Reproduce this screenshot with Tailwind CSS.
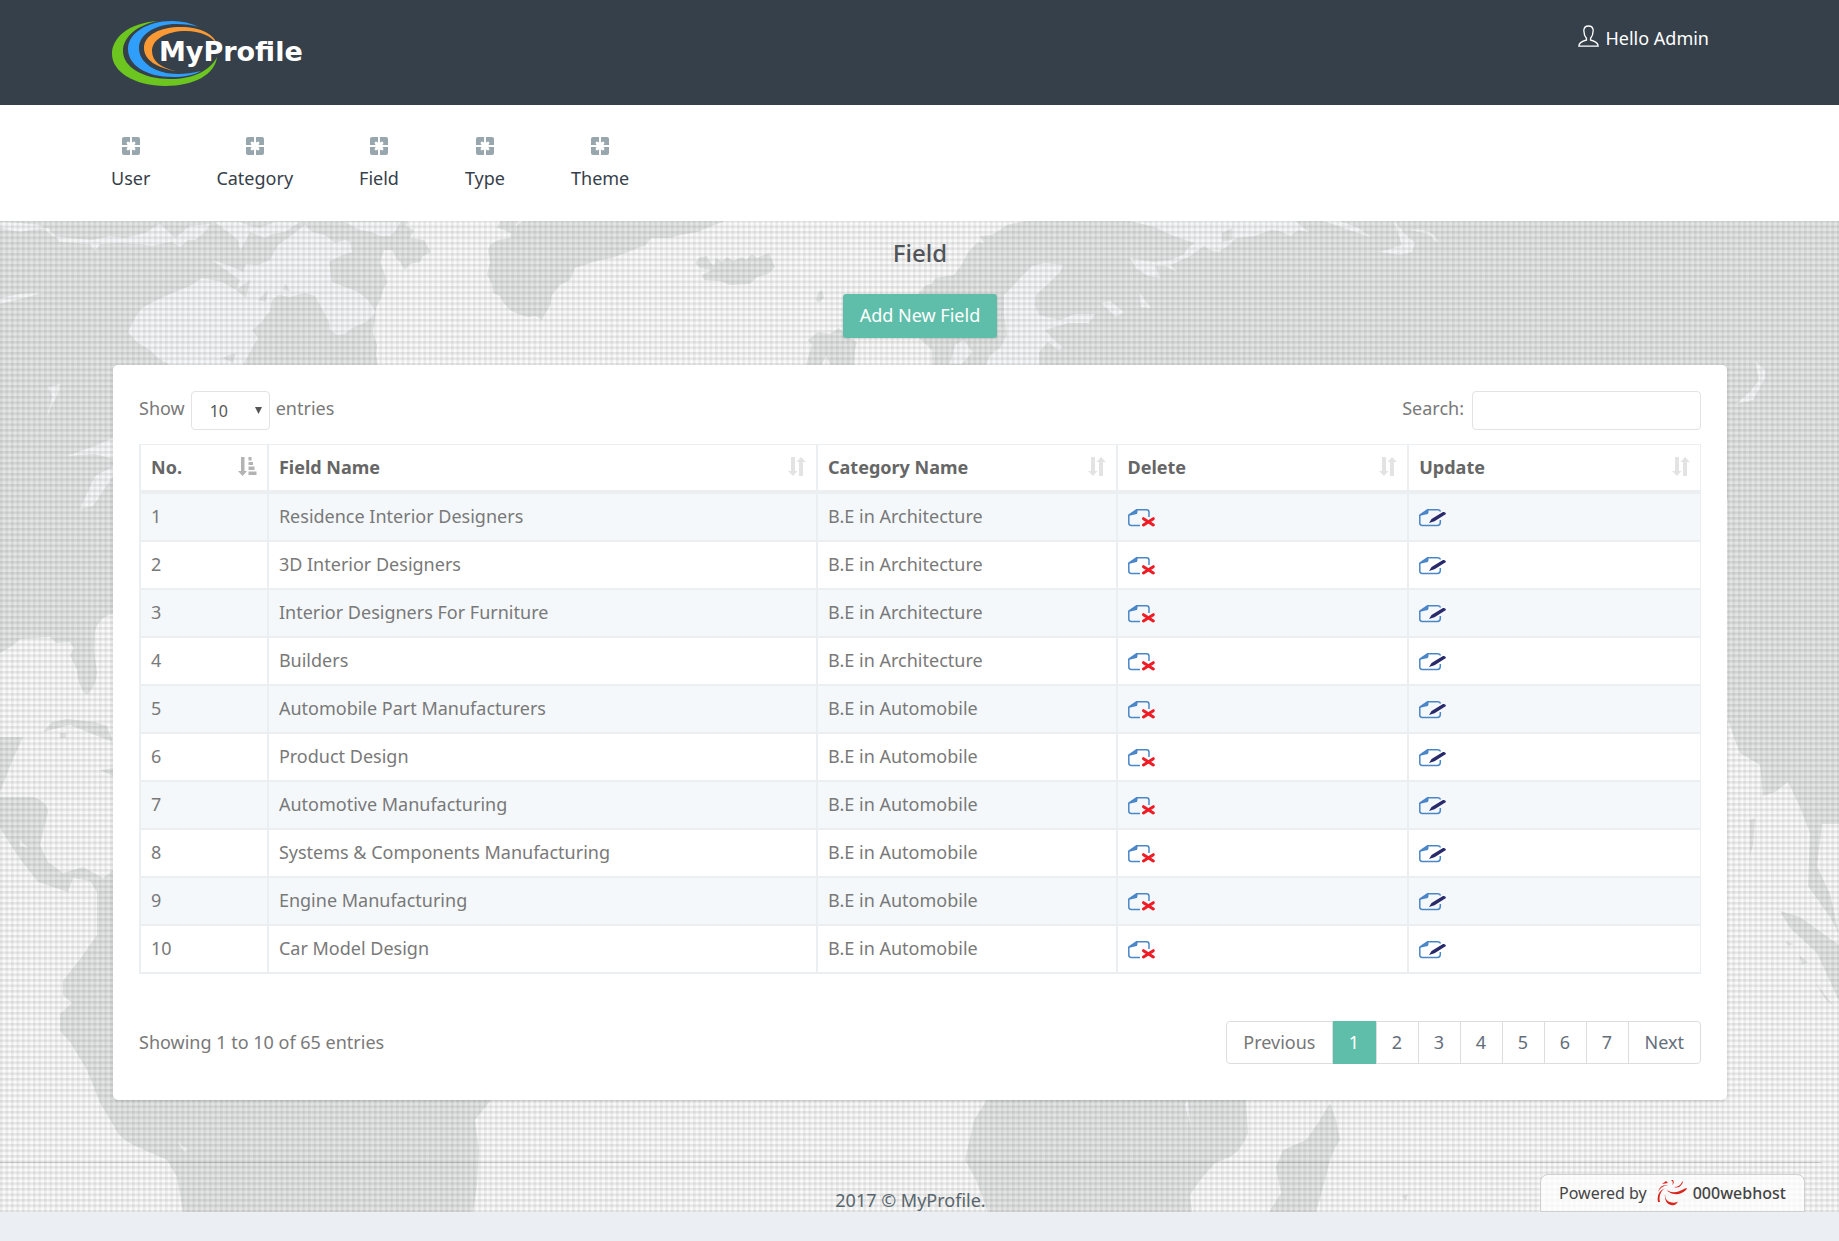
<!DOCTYPE html>
<html lang="en">
<head>
<meta charset="utf-8">
<title>MyProfile - Field</title>
<script src="https://cdn.jsdelivr.net/npm/@tailwindcss/browser@4"></script>
</head>
<body class="bg-[#ebeef3] font-['Noto_Sans',sans-serif] text-[18px] leading-6 text-[#797979]">

<svg class="hidden" aria-hidden="true">
  <symbol id="brackets" viewBox="0 0 18 18">
    <path fill="currentColor" d="M2 0H8V5.500L6 4.500 5 5 4.500 6 5.500 8H0V2Q0 0 2 0ZM10 0H16Q18 0 18 2V8H12.500L13.500 6 13 5 12 4.500 10 5.500ZM0 10H5.500L4.500 12 5 13 6 13.500 8 12.500V18H2Q0 18 0 16ZM18 10V16Q18 18 16 18H10V12.500L12 13.500 13 13 13.500 12 12.500 10Z"/>
  </symbol>
  <symbol id="sort-both" viewBox="0 0 18 19">
    <path fill="currentColor" d="M3 0H7V14H9.500L5 19 0 14H3ZM11 19V5H8.500L13 0 18 5H15V19Z"/>
  </symbol>
  <symbol id="sort-asc" viewBox="0 0 19 19">
    <path fill="currentColor" d="M3 0H6.500V14H9L4.500 19 0 14H3ZM10.500 0H13.500V3.500H10.500ZM10.500 5H15V8H10.500ZM10.500 9.500H16.500V13H10.500ZM10.500 14.500H18.500V18H10.500Z"/>
  </symbol>
  <symbol id="doc-delete" viewBox="0 0 27 18">
    <path fill="none" stroke="#4a86c8" stroke-width="1.500" d="M8 .8H18.500Q21 .8 21 3.300V8M.8 6V14Q.8 16.400 3.200 16.400H12"/>
    <path fill="#4a86c8" d="M8 .2H9.500V3Q9.500 5.500 6.500 5.500L.3 7V5.500Z"/>
    <path stroke="#ee1c25" stroke-width="3" stroke-linecap="round" d="M15.500 9.700 25.300 16M25.300 9.700 15.500 16"/>
  </symbol>
  <symbol id="doc-edit" viewBox="0 0 27 18">
    <path fill="none" stroke="#4a86c8" stroke-width="1.500" d="M8 .8H18.500Q21 .8 21.500 2.500M.8 6V14Q.8 16.400 3.200 16.400H18.500Q21.300 16.400 21.300 13.500V11"/>
    <path fill="#4a86c8" d="M8 .2H9.500V3Q9.500 5.500 6.500 5.500L.3 7V5.500Z"/>
    <path fill="#282a6b" d="M10 14 12.500 10 24 3Q26.500 2.500 27 5L15.500 12.300Z"/>
  </symbol>
</svg>

<header class="flex h-[105px] items-start justify-between bg-[#36404a] px-28">
  <a href="#" class="mt-5" aria-label="MyProfile home">
    <svg class="h-[68px] w-[198px]" viewBox="112 20 198 68">
      <path fill="#6cc61f" d="M158 21C128 23 112 38 112 54 112 72 135 86 165 86 195 86 215 74 217 57 210 71 193 79 170 79 143 79 123 67 123 51 123 37 137 25 158 21Z"/>
      <path fill="#2f9ffb" d="M199 27C191 23 182 21 172 21 146 21 128 34 128 49 128 65 146 77 173 77 184 77 194 75 201 71 193 73 186 74 178 74 156 74 139 63 139 48 139 34 156 24 176 24 185 24 193 25 199 27Z"/>
      <path fill="#fb9a35" d="M176 71C157 68 144 60 144 48 144 35 160 27 181 27 200 27 214 34 217 44 211 36 200 31 186 31 167 31 152 39 152 51 152 61 161 68 176 71Z"/>
      <text x="159" y="61" fill="#fff" font-family="'DejaVu Sans',sans-serif" font-weight="700" font-size="27">MyProfile</text>
    </svg>
  </a>
  <a href="#" class="mr-[18px] mt-[25px] flex items-center gap-[6px] text-white">
    <svg class="mb-1 h-[22px] w-[21px]" viewBox="0 0 21 22" fill="none" stroke="currentColor" stroke-width="1.300"><path d="M8.500 13.500V15Q1 17 .8 21.200H20.200Q20 17 12.500 15V13.500Q15.200 10 15.200 5.500 15 1 10.500 1 6 1 5.800 5.500 5.800 10 8.500 13.500Z"/></svg>
    Hello Admin
  </a>
</header>

<nav class="flex h-[116px] items-start gap-[66px] bg-white pl-[111px] pr-28 pt-8 text-[#36404a]">
  <a href="#" class="flex flex-col items-center gap-[11px]"><svg class="size-[18px] text-[#98a6ad]"><use href="#brackets"/></svg>User</a>
  <a href="#" class="flex flex-col items-center gap-[11px]"><svg class="size-[18px] text-[#98a6ad]"><use href="#brackets"/></svg>Category</a>
  <a href="#" class="flex flex-col items-center gap-[11px]"><svg class="size-[18px] text-[#98a6ad]"><use href="#brackets"/></svg>Field</a>
  <a href="#" class="flex flex-col items-center gap-[11px]"><svg class="size-[18px] text-[#98a6ad]"><use href="#brackets"/></svg>Type</a>
  <a href="#" class="flex flex-col items-center gap-[11px]"><svg class="size-[18px] text-[#98a6ad]"><use href="#brackets"/></svg>Theme</a>
</nav>

<div class="relative isolate">
  <svg class="absolute inset-0 -z-10 h-full w-full" viewBox="0 221 1839 991" preserveAspectRatio="xMidYMin slice" aria-hidden="true">
    <defs>
      <pattern id="weave" width="5.500" height="5.500" patternUnits="userSpaceOnUse">
        <path fill="#000" fill-opacity=".06" d="M0 0H2.500V5.500H0Z"/>
        <path fill="#000" fill-opacity=".08" d="M0 0H5.500V2.500H0Z"/>
      </pattern>
    </defs>
    <path fill="#fafafa" d="M0 221H1839V1212H0Z"/>
    <g fill="#e4e5e5">
      <path d="M0 221H408L406 226 414 230 410 238 424 240 431 252 423 256 420 262 410 264 405 270 400 262 396 258 392 250 384 250 380 262 384 272 387 282 383 290 381 298 376 308 375 320 373 332 377 345 376 355 378 365V600H113V614Q100 616 95 631L94 650 97 672Q97 685 87 695 79 690 77 670L70 655 74 648 70 642 56 643 50 637 35 638 20 639 12 646 0 653Z"/>
      <path d="M522 221H725L712 226 698 232 680 235 670 238 651 238 645 246 640 247 628 252 612 258 600 260 575 268 570 280 560 285 552 295 550 306 546 312 542 320 536 316 528 317 518 314 510 310 503 302 500 296 493 293 492 284 487 275 490 262 488 250 490 245 498 240 510 238 512 230Z"/>
      <path d="M500 221H518L512 234 504 230 497 228Z"/>
      <path d="M695 263 700 257 707 256 710 262 714 266 716 258 722 262 727 257 733 261 742 257 746 260 752 254 757 258 769 253 772 260 775 267 768 274 757 277 750 284 730 285 720 281 704 280 702 275 712 270 700 268Z"/>
      <path d="M816 300 818 293 822 290 824 298 818 303ZM806 365 812 345 808 340 818 332 830 334 839 328 846 336 857 342 855 350 854 365H830L826 355 822 365Z"/>
      <path d="M919 293 926 285 932 284 935 278 954 275 962 264 968 252 978 242 984 243 980 236 992 235 1007 225 1025 221H1839V824H1822L1817 866 1830 894 1839 934 1830 917 1808 886 1810 833 1799 805 1788 782 1775 792 1763 796 1760 765 1740 753 1736 743 1728 720V500H934L932 350 919 338Z"/>
      <path d="M0 737H23L13 759 0 792ZM0 797H33Q48 802 48 812L40 845 48 862 63 873 83 867 103 878 113 870H500L491 1100 475 1120 479 1150 477 1185 473 1212H183L177 1177 167 1160 140 1148 Q120 1140 115 1128L100 1103 87 1070 70 1042 60 1031V1014L72 1003 63 995V981L80 959 97 935V892L90 881 73 878 68 892 38 882 20 859 0 828Z"/>
      <path d="M43 732 52 722 67 719 95 722 107 726 113 742 100 737 70 725ZM60 733H66V738H60ZM100 770 113 768V776Z"/>
      <path d="M988 1098H1246L1248 1133Q1242 1150 1230 1157L1215 1163 1200 1180 1190 1195 1192 1212H988L976 1180 965 1160 974 1120Z"/>
      <path d="M1330 1103 1336 1120 1340 1140 1335 1148 1330 1160 1325 1180 1316 1212H1269L1281 1193 1276 1167 1283 1150 1306 1140 1318 1123ZM1402 1196 1408 1194 1406 1201Z"/>
      <path d="M1780 911 1800 917 1839 945V1001L1817 953 1790 928ZM1785 941 1794 944 1788 946ZM1799 955 1808 962 1802 965ZM1815 982 1833 1005 1826 1000ZM1750 820 1755 818 1753 845 1750 855Z"/>
    </g>
    <g fill="#f6f7f8">
      <path d="M202 278 190 286 170 294 153 302 142 308 135 318 128 332 138 343 150 350 158 358 170 365H243L250 352 258 338 252 330 262 322 266 315 270 312 272 300 279 295 290 297 305 293 315 296 320 305 329 322 330 330 337 335 345 334 352 328 366 322 376 312 368 300 358 292 348 288 332 282 329 262 340 256 352 252 350 242 345 240 335 243 325 235 312 232 305 225 288 238 278 245 270 260 258 265 246 264 236 290 222 282Z"/>
      <path d="M0 222 20 223 40 225 52 236 70 238 92 240 110 236 125 238 145 233 160 224 175 238 190 226 210 224 205 232 195 240 188 240 180 247 172 242 165 243 152 246 140 244 120 243 100 244 95 251 90 244 60 242 48 228 30 230 20 232 0 228ZM215 222H240L250 226 260 228 275 222H300L292 227 285 232 272 234 265 238 250 232 246 240 240 250 238 240 232 235ZM0 298 20 294 45 292 28 297 0 304ZM212 260 230 266 250 275 240 280ZM345 222H400L396 230 390 236 380 236 372 232 360 230Z"/>
      <path d="M1045 263 1063 265 1060 272 1050 282 1036 295 1035 305 1039 315 1060 320 1075 314 1095 314 1089 323 1068 323 1045 330 1052 338 1063 348 1058 350 1048 342 1039 352V365H986L990 355 1000 348 1007 335 1004 315 1004 295 1014 285 1020 278 1032 266ZM955 345 964 340 972 352 962 364H950Z"/>
      <path d="M1112 248 1130 258 1154 262 1170 260 1183 255 1188 248 1195 243 1186 240 1171 235 1155 227 1130 221H1295L1309 232 1298 230 1290 236 1280 231 1271 230 1255 236 1236 238 1228 246 1218 252 1210 250 1204 246 1190 256 1171 265 1177 272 1165 266 1155 266 1160 278 1148 276 1136 268 1130 258Z"/>
      <path d="M1324 221H1340L1358 228 1371 237 1355 232ZM1394 221 1405 234 1415 243 1412 252 1400 255 1380 252 1402 245ZM1410 230Q1435 228 1438 243L1428 234ZM1101 303 1110 301 1124 312 1116 317ZM1139 292 1145 300 1151 308 1141 307Z"/>
      <path d="M48 387 60 384 58 394 52 405 47 417 52 396ZM67 456 95 446 113 438V459L95 454ZM80 509 95 476 113 467V476L93 506ZM1755 361 1765 370V378L1753 400 1736 404 1750 392 1759 380ZM178 1142 188 1150 184 1152ZM1188 1100 1191 1128 1185 1105ZM20 840 28 848 20 846Z"/>
    </g>
    <g fill="#e4e5e5"><path d="M222 358 230 355 236 353 233 363ZM236 290 250 280 246 298ZM258 300 268 290 266 302ZM1222 233 1232 228 1232 240 1222 242ZM285 283 290 291 283 290Z"/></g>
    <path fill="url(#weave)" d="M0 221H1839V1212H0Z"/>
  </svg>

  <main class="flex flex-col items-center pl-[113px] pr-28 pt-4">
    <h1 class="text-[24px] font-medium leading-8 text-[#505458]">Field</h1>
    <button type="button" class="mt-[25px] h-11 rounded-[3px] bg-[#5fbeaa] px-[17px] pb-0.5 text-white shadow-sm">Add New Field</button>

    <section class="mt-[27px] w-full rounded-[5px] bg-white px-[26px] pb-9 pt-[26px] shadow-sm">
      <div class="flex items-start justify-between">
        <div class="flex items-start gap-[6px]">
          <label for="len" class="pt-[5px]">Show</label>
          <div class="relative">
            <select id="len" class="h-[39px] w-[79px] appearance-none rounded-[4px] border border-[#e3e3e3] bg-white pl-[18px] text-base text-[#565656]"><option>10</option><option>25</option><option>50</option><option>100</option></select>
            <svg class="pointer-events-none absolute right-2 top-4 h-[7px] w-[7px]" viewBox="0 0 7 7"><path fill="#555" d="M0 0H7L3.500 7Z"/></svg>
          </div>
          <span class="pt-[5px]">entries</span>
        </div>
        <div class="flex items-start gap-2">
          <label for="search" class="pt-[5px]">Search:</label>
          <input id="search" type="search" class="h-[39px] w-[229px] rounded-[4px] border border-[#e3e3e3] bg-white px-3">
        </div>
      </div>

      <table class="mt-[14px] w-full table-fixed border-separate border-spacing-0 border-l-2 border-t border-[#ebeff2] text-left">
        <colgroup><col class="w-[8.2%]"><col class="w-[35.2%]"><col class="w-[19.2%]"><col class="w-[18.7%]"><col class="w-[18.7%]"></colgroup>
        <thead id="head" class="text-[#666]"></thead>
        <tbody id="rows"></tbody>
      </table>

      <div class="mt-[47px] flex items-center justify-between">
        <p class="pb-0.5">Showing 1 to 10 of 65 entries</p>
        <nav aria-label="Pages" class="flex h-[43px] items-stretch divide-x divide-[#ddd] rounded-[4px] border border-[#ddd] text-[#636e7b]">
          <a href="#" class="flex items-center px-4 pb-0.5 text-[#777]">Previous</a>
          <a href="#" aria-current="page" class="-my-px flex w-11 items-center justify-center bg-[#5fbeaa] pb-0.5 text-white">1</a>
          <a href="#" class="flex w-[42px] items-center justify-center pb-0.5">2</a>
          <a href="#" class="flex w-[42px] items-center justify-center pb-0.5">3</a>
          <a href="#" class="flex w-[42px] items-center justify-center pb-0.5">4</a>
          <a href="#" class="flex w-[42px] items-center justify-center pb-0.5">5</a>
          <a href="#" class="flex w-[42px] items-center justify-center pb-0.5">6</a>
          <a href="#" class="flex w-[42px] items-center justify-center pb-0.5">7</a>
          <a href="#" class="flex items-center px-4 pb-0.5">Next</a>
        </nav>
      </div>
    </section>
  </main>

  <footer class="mr-[18px] mt-[62px] border-t border-black/15 pt-[25px] text-center text-[#58666e]">2017 © MyProfile.</footer>

  <a href="#" class="absolute bottom-0 right-[34px] flex h-[38px] w-[265px] items-center justify-center gap-[10px] rounded-t-[8px] border border-[#d0d0d0] bg-white/75 text-base text-[#444]">
    Powered by
    <span class="flex items-center gap-[6px] font-medium">
      <svg class="h-[26px] w-[30px]" viewBox="0 0 30 26" fill="#d9261c">
        <path d="M8 14Q8 22 15 22.500 19 23 21 21.500 19 26 14 25 7 23 8 14ZM10 10Q17 15 28 8.500 31 7 29 10 24 15 17 14 12 13 10 10ZM17 7Q23 7 25 2 27 0 25 4 22 9 17 7ZM8 8Q1 13 3 22L1 22Q-1 12 8 8ZM11 5Q4 6 1 12 3 4 11 5ZM11 3 5 4 9 1ZM16 0Q18 3 15 5 17 2 14 0Z"/>
      </svg>
      000webhost
    </span>
  </a>
</div>
<div class="h-[29px]"></div>

<script>
  const headings = ["No.", "Field Name", "Category Name", "Delete", "Update"];
  document.getElementById("head").innerHTML = "<tr>" + headings.map((h, i) => `
    <th scope="col" class="h-[49px] border-b-4 border-r-2 border-[#ebeff2] px-2.5 pb-0.5 font-bold last:border-r">
      <div class="flex items-center justify-between">${h}
        ${i === 0
          ? '<svg class="h-[19px] w-[19px] text-[#b3b3b3]"><use href="#sort-asc"/></svg>'
          : '<svg class="h-[19px] w-[18px] text-[#e3e3e3]"><use href="#sort-both"/></svg>'}
      </div>
    </th>`).join("") + "</tr>";

  const fields = [
    ["Residence Interior Designers", "B.E in Architecture"],
    ["3D Interior Designers", "B.E in Architecture"],
    ["Interior Designers For Furniture", "B.E in Architecture"],
    ["Builders", "B.E in Architecture"],
    ["Automobile Part Manufacturers", "B.E in Automobile"],
    ["Product Design", "B.E in Automobile"],
    ["Automotive Manufacturing", "B.E in Automobile"],
    ["Systems &amp; Components Manufacturing", "B.E in Automobile"],
    ["Engine Manufacturing", "B.E in Automobile"],
    ["Car Model Design", "B.E in Automobile"],
  ];
  const textCell = "h-12 border-b-2 border-r-2 border-[#ebeff2] px-2.5 pb-0.5";
  const iconCell = "h-12 border-b-2 border-r-2 border-[#ebeff2] px-2.5 pt-0.5 last:border-r";
  document.getElementById("rows").innerHTML = fields.map(([name, category], i) => `
    <tr class="odd:bg-[#f4f8fb]">
      <td class="${textCell}">${i + 1}</td>
      <td class="${textCell}">${name}</td>
      <td class="${textCell}">${category}</td>
      <td class="${iconCell}"><a href="#" aria-label="Delete ${name}"><svg class="h-[18px] w-[27px]"><use href="#doc-delete"/></svg></a></td>
      <td class="${iconCell}"><a href="#" aria-label="Update ${name}"><svg class="h-[18px] w-[27px]"><use href="#doc-edit"/></svg></a></td>
    </tr>`).join("");
</script>
</body>
</html>
